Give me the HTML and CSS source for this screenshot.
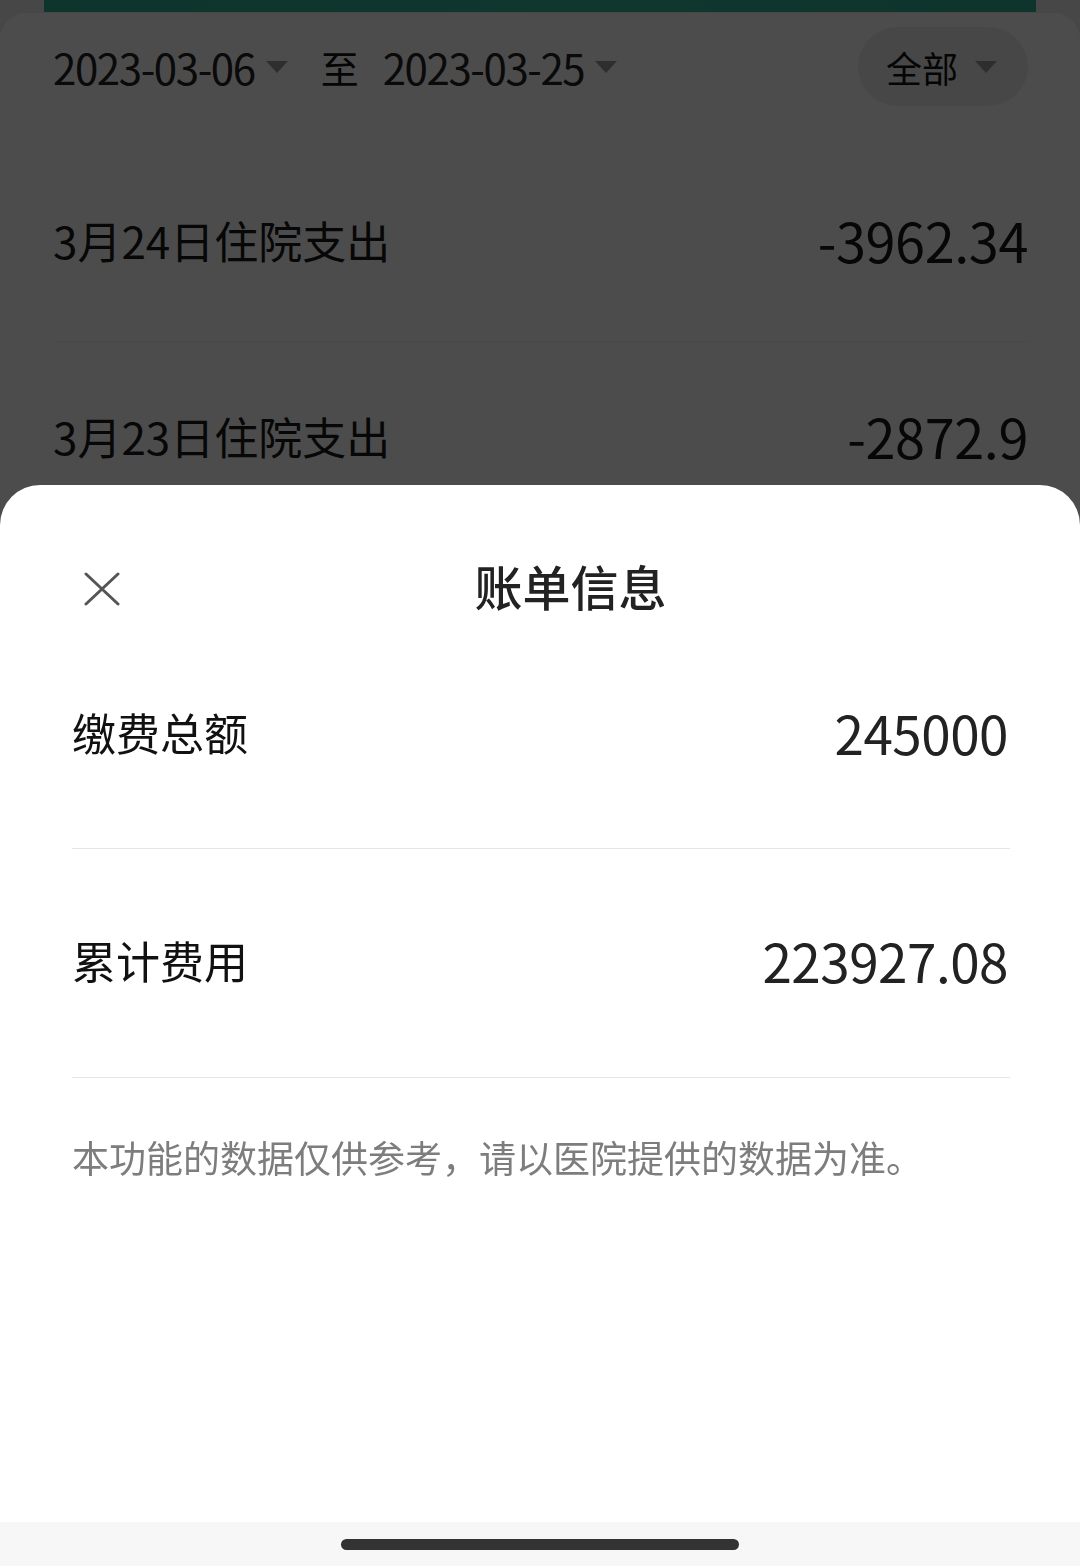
FILE: index.html
```html
<!DOCTYPE html>
<html lang="zh-CN">
<head>
    <meta charset="UTF-8">
    <meta name="viewport" content="width=device-width, initial-scale=1.0">
    <title>账单信息</title>
    <link rel="stylesheet" href="styles.css">
</head>

<body>
    <div class="top-bar"></div>
    <main class="card">
        <div class="filter-row">
            <div class="date-range">
                <span class="date">2023-03-06</span>
                <svg class="caret" viewBox="0 0 24 14"><polygon points="1,1 23,1 12,13" /></svg>
                <span class="to">至</span>
                <span class="date">2023-03-25</span>
                <svg class="caret" viewBox="0 0 24 14"><polygon points="1,1 23,1 12,13" /></svg>
            </div>
            <div class="type-pill">
                <span>全部</span>
                <svg class="caret" viewBox="0 0 24 14"><polygon points="1,1 23,1 12,13" /></svg>
            </div>
        </div>

        <div class="bill-row">
            <span class="bill-name">3月24日住院支出</span>
            <span class="bill-amount">-3962.34</span>
        </div>
        <div class="bill-row">
            <span class="bill-name">3月23日住院支出</span>
            <span class="bill-amount">-2872.9</span>
        </div>
        <div class="bill-row">
            <span class="bill-name">3月22日住院支出</span>
            <span class="bill-amount">-3105.6</span>
        </div>
    </main>

    <div class="mask"></div>

    <section class="sheet">
        <div class="sheet-header">
            <button type="button" class="close-btn">
                <svg viewBox="0 0 36 34"><path d="M2 2 L34 32 M34 2 L2 32" /></svg>
            </button>
            <h2 class="sheet-title">账单信息</h2>
        </div>

        <div class="info-row">
            <span class="info-label">缴费总额</span>
            <span class="info-value">245000</span>
        </div>
        <div class="info-row">
            <span class="info-label">累计费用</span>
            <span class="info-value">223927.08</span>
        </div>

        <p class="info-note">本功能的数据仅供参考，请以医院提供的数据为准。</p>

        <div class="nav-bar">
            <div class="nav-handle"></div>
        </div>
    </section>
</body>

</html>
```

FILE: styles.css
```css
body {
    margin: 0;
    background-color: #efefef;
    font-family: "Noto Sans CJK SC", sans-serif;
    color: #333;
}

.top-bar {
    height: 12px;
    margin: 0 44px;
    background: linear-gradient(100deg, #2fb295, #36b89c 60%, #2fae93);
}

.card {
    margin-top: 1px;
    background-color: #fff;
    border-radius: 26px 26px 0 0;
    height: 1600px;
    padding: 0 52px 0 53px;
}

.filter-row {
    display: flex;
    justify-content: space-between;
    align-items: flex-start;
    padding-top: 14px;
    height: 133px;
    box-sizing: border-box;
    border-bottom: 1px solid #fff;
}

.date-range {
    display: flex;
    align-items: center;
    height: 79px;
}

.date {
    font-size: 42px;
    letter-spacing: -1.4px;
    color: #222;
}

.to {
    font-size: 38px;
    margin: 0 24px 0 32px;
    color: #111;
}

.caret {
    width: 24px;
    height: 14px;
    margin-left: 10px;
    fill: #999;
}

.type-pill {
    display: flex;
    align-items: center;
    height: 79px;
    padding: 0 30px 0 28px;
    border-radius: 40px;
    background-color: #ededed;
    font-size: 36px;
    color: #111;
}

.type-pill .caret {
    margin-left: 16px;
}

.bill-row {
    display: flex;
    justify-content: space-between;
    align-items: center;
    height: 195px;
    padding-bottom: 8px;
    box-sizing: content-box;
    height: 187px;
    border-bottom: 1px solid #f0f0f0;
}

.bill-name {
    font-size: 44px;
    color: #1a1a1a;
}

.bill-amount {
    font-size: 54px;
    color: #1a1a1a;
    letter-spacing: -0.4px;
}

.mask {
    position: fixed;
    top: 0;
    left: 0;
    right: 0;
    bottom: 0;
    background-color: rgba(0, 0, 0, 0.7);
}

.sheet {
    position: fixed;
    top: 485px;
    left: 0;
    right: 0;
    bottom: 0;
    display: flex;
    flex-direction: column;
    background-color: #fff;
    border-radius: 40px 40px 0 0;
}

.sheet-header {
    display: flex;
    align-items: flex-start;
    height: 136px;
    padding: 72px 59px 0 84px;
    box-sizing: border-box;
}

.close-btn {
    width: 36px;
    height: 64px;
    padding: 0;
    border: none;
    background: none;
    display: flex;
    align-items: center;
}

.close-btn svg {
    width: 36px;
    height: 34px;
    stroke: #555;
    stroke-width: 3;
    stroke-linecap: round;
    fill: none;
}

.sheet-title {
    flex: 1;
    margin: -4px 0 0 0;
    text-align: center;
    font-size: 48px;
    font-weight: 500;
    line-height: 64px;
    color: #222;
}

.info-row {
    display: flex;
    justify-content: space-between;
    align-items: center;
    height: 228px;
    padding-bottom: 6px;
    box-sizing: border-box;
    margin: 0 70px 0 72px;
    border-bottom: 1px solid #e6e6e6;
}

.info-row + .info-row {
    height: 229px;
}

.info-label {
    font-size: 44px;
    color: #111;
}

.info-value {
    font-size: 53px;
    color: #222;
    margin-right: 2px;
    letter-spacing: -0.5px;
}

.info-note {
    margin: 0;
    padding: 53px 72px 0 72px;
    font-size: 37px;
    line-height: 52px;
    color: #7d7d7d;
}

.nav-bar {
    margin-top: auto;
    height: 44px;
    display: flex;
    justify-content: center;
    align-items: center;
    background-color: #f7f7f7;
}

.nav-handle {
    width: 398px;
    height: 11px;
    border-radius: 6px;
    background-color: #333;
}
```
